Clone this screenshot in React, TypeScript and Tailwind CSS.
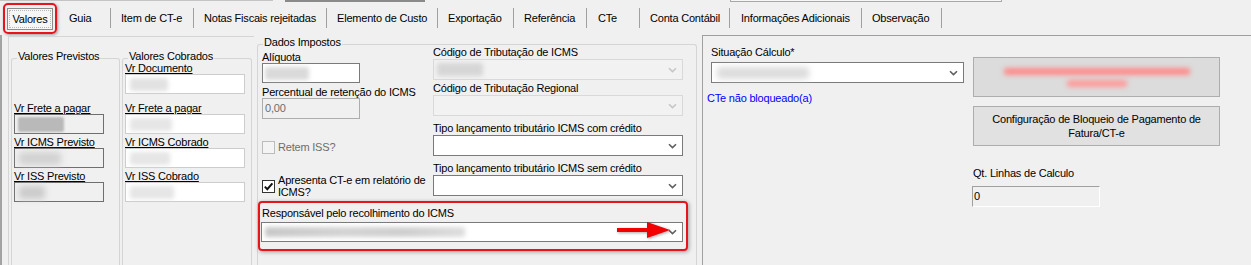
import React from "react";

const tabs = [
  { label: "Item de CT-e", cls: "w-[82px] pl-[10px]" },
  { label: "Notas Fiscais rejeitadas", cls: "w-[132px] pl-[10px]" },
  { label: "Elemento de Custo", cls: "w-[110px] pl-[10px]" },
  { label: "Exportação", cls: "w-[75px] pl-[10px]" },
  { label: "Referência", cls: "w-[72px] pl-[10px]" },
  { label: "CTe", cls: "w-[52px] pl-[11px]" },
  { label: "Conta Contábil", cls: "w-[89px] pl-[10px]" },
  { label: "Informações Adicionais", cls: "w-[131px] pl-[11px]" },
  { label: "Observação", cls: "w-[79px] pl-[10px]" },
];

function Sep() {
  return <div className="mt-[5px] h-[20px] w-px bg-[#a0a0a0]" />;
}

function Chevron({ disabled }: { disabled?: boolean }) {
  return (
    <svg width="9" height="6" viewBox="0 0 9 6" className="shrink-0">
      <path
        d="M1 1.2L4.5 4.6L8 1.2"
        fill="none"
        stroke={disabled ? "#c6c6c6" : "#5f5f5f"}
        strokeWidth="1.6"
      />
    </svg>
  );
}

function Label({ children, className = "" }: { children: React.ReactNode; className?: string }) {
  return <div className={`h-[12px] whitespace-nowrap leading-[12px] ${className}`}>{children}</div>;
}

function Combo({
  disabled,
  children,
  className = "",
}: {
  disabled?: boolean;
  children?: React.ReactNode;
  className?: string;
}) {
  return (
    <div
      className={`relative flex items-center border pl-[3px] pr-[5px] ${
        disabled ? "border-[#d9d9d9] bg-[#f2f2f2]" : "border-[#7a7a7a] bg-white"
      } ${className}`}
    >
      <div className="flex min-w-0 flex-1 items-center">{children}</div>
      <Chevron disabled={disabled} />
    </div>
  );
}

function Smudge({ className }: { className: string }) {
  return <div className={`rounded-[2px] ${className}`} />;
}

function Group({
  title,
  className = "",
  children,
}: {
  title: string;
  className?: string;
  children?: React.ReactNode;
}) {
  return (
    <div className={`relative rounded-t-[3px] border border-b-0 border-[#d5d5d5] ${className}`}>
      <span className="absolute -top-[9px] left-[5px] whitespace-nowrap bg-[#f0f0f0] px-px leading-[12px]">
        {title}
      </span>
      {children}
    </div>
  );
}

function GrayField({ children }: { children?: React.ReactNode }) {
  return (
    <div className="flex h-[20px] w-[90px] items-center border border-[#6f6f6f] bg-[#f0f0f0] pl-[2px]">
      {children}
    </div>
  );
}

function WhiteField({ children }: { children?: React.ReactNode }) {
  return (
    <div className="flex h-[20px] w-[120px] items-center border border-[#cdcdcd] bg-white pl-[2px]">
      {children}
    </div>
  );
}

export default function App() {
  return (
    <div className="h-[265px] w-[1251px] overflow-hidden bg-[#f0f0f0] font-['Liberation_Sans',Arial,sans-serif] text-[11px] tracking-[-0.2px] text-black">
      {/* slice of the controls above */}
      <div className="flex h-[3px] items-start">
        <div className="h-px w-[273px] bg-[#c4c4c4]" />
        <div className="ml-[12px] h-[2px] w-[140px] bg-[#8a8a8a]" />
        <div className="ml-[305px] h-[2px] w-[272px] border-x border-b border-[#a8a8a8] bg-[#f7f7f7]" />
      </div>

      {/* tab strip */}
      <div className="flex h-[32px] items-start">
        <div className="ml-[3px] h-[31px] w-[54px] rounded-[5px] border-2 border-[#e8141b] px-[2px] pt-[3px] shadow-[1px_1px_3px_rgba(0,0,0,0.35)]">
          <div className="h-[22px] w-[46px] border border-[#8c8c8c] bg-[#f6f6f6] p-px">
            <div className="flex h-full items-center justify-center border border-dotted border-[#b8b8b8]">
              Valores
            </div>
          </div>
        </div>
        <div className="flex h-[31px] w-[53px] items-center pl-[12px]">Guia</div>
        <Sep />
        {tabs.map((t) => (
          <React.Fragment key={t.label}>
            <div className={`flex h-[31px] items-center whitespace-nowrap ${t.cls}`}>{t.label}</div>
            <Sep />
          </React.Fragment>
        ))}
      </div>

      {/* tab page */}
      <div className="flex h-[230px]">
        <div className="flex w-[702px] shrink-0 items-start border-l-2 border-[#a3a3a3]">
          {/* valores panel */}
          <div className="ml-[6px] mt-px flex h-[240px] w-[246px] border-l border-t border-[#d5d5d5]">
            <Group title="Valores Previstos" className="ml-[2px] mt-[21px] h-[220px] w-[109px] pl-[2px]">
              <div className="mt-[43px]">
                <Label className="underline">Vr Frete a pagar</Label>
                <GrayField>
                  <Smudge className="ml-px h-[15px] w-[46px] bg-[#b9b9b9] blur-[1px]" />
                </GrayField>
                <Label className="mt-[2px] underline">Vr ICMS Previsto</Label>
                <GrayField>
                  <Smudge className="ml-[2px] h-[13px] w-[42px] bg-[#d2d2d2] blur-[3px]" />
                </GrayField>
                <Label className="mt-[2px] underline">Vr ISS Previsto</Label>
                <GrayField>
                  <Smudge className="ml-[2px] h-[13px] w-[26px] bg-[#cbcbcb] blur-[3px]" />
                </GrayField>
              </div>
            </Group>
            <Group title="Valores Cobrados" className="ml-[2px] mt-[21px] h-[220px] w-[130px] pl-[2px]">
              <div className="mt-[3px]">
                <Label className="underline">Vr Documento</Label>
                <WhiteField>
                  <Smudge className="ml-[2px] h-[13px] w-[38px] bg-[#e2e2e2] blur-[2px]" />
                </WhiteField>
                <Label className="mt-[8px] underline">Vr Frete a pagar</Label>
                <WhiteField>
                  <Smudge className="ml-[2px] h-[13px] w-[42px] bg-[#e6e6e6] blur-[2px]" />
                </WhiteField>
                <Label className="mt-[2px] underline">Vr ICMS Cobrado</Label>
                <WhiteField>
                  <Smudge className="ml-[2px] h-[13px] w-[40px] bg-[#e6e6e6] blur-[2px]" />
                </WhiteField>
                <Label className="mt-[2px] underline">Vr ISS Cobrado</Label>
                <WhiteField>
                  <Smudge className="ml-[2px] h-[13px] w-[44px] bg-[#e6e6e6] blur-[2px]" />
                </WhiteField>
              </div>
            </Group>
          </div>

          {/* dados impostos */}
          <Group title="Dados Impostos" className="ml-[3px] mt-[9px] h-[221px] w-[440px]">
            <div className="flex h-[156px]">
              <div className="ml-[4px] flex w-[171px] flex-col">
                <Label className="mt-[6px]">Alíquota</Label>
                <div className="flex h-[20px] w-[98px] items-center border border-[#7a7a7a] bg-white pl-[2px]">
                  <Smudge className="h-[13px] w-[44px] bg-[#dadada] blur-[2px]" />
                </div>
                <Label className="mt-[3px]">Percentual de retenção do ICMS</Label>
                <div className="flex h-[21px] w-[98px] items-center border border-[#adadad] bg-[#f0f0f0] pl-[2px] text-[#6d6d6d]">
                  0,00
                </div>
                <div className="mt-[22px] flex h-[13px] items-center">
                  <div className="h-[13px] w-[13px] border border-[#bcbcbc] bg-[#f4f4f4]" />
                  <span className="ml-[3px] text-[#6d6d6d]">Retem ISS?</span>
                </div>
                <div className="mt-[20px] flex items-center">
                  <div className="flex h-[13px] w-[13px] shrink-0 items-center justify-center border border-[#333333] bg-white">
                    <svg width="11" height="11" viewBox="0 0 11 11">
                      <path d="M1.8 5.6L4.3 8.2L9.4 2.4" fill="none" stroke="#111" strokeWidth="2" />
                    </svg>
                  </div>
                  <div className="ml-[3px] whitespace-nowrap leading-[12px]">
                    Apresenta CT-e em relatório de
                    <br />
                    ICMS?
                  </div>
                </div>
              </div>
              <div className="flex w-[250px] flex-col">
                <Label className="mt-px">Código de Tributação de ICMS</Label>
                <Combo disabled className="mt-px h-[21px]">
                  <Smudge className="h-[13px] w-[46px] bg-[#d6d6d6] blur-[2px]" />
                </Combo>
                <Label className="mt-[2px]">Código de Tributação Regional</Label>
                <Combo disabled className="mt-px h-[21px]" />
                <Label className="mt-[6px]">Tipo lançamento tributário ICMS com crédito</Label>
                <Combo className="mt-px h-[21px]" />
                <Label className="mt-[6px]">Tipo lançamento tributário ICMS sem crédito</Label>
                <Combo className="mt-px h-[21px]" />
              </div>
            </div>
            <div className="mt-0 h-[50px] w-[430px] rounded-[4px] border-2 border-[#e8141b] pl-px pr-[3px] pt-[4px] shadow-[1px_1px_4px_rgba(0,0,0,0.35)]">
              <Label className="ml-px">Responsável pelo recolhimento do ICMS</Label>
              <Combo className="mt-[3px] h-[20px]">
                <Smudge className="h-[10px] w-[200px] bg-[linear-gradient(90deg,#c8c8c8,#d4d4d4_40%,#cfcfcf_70%,#dedede)] blur-[2px]" />
                <svg
                  width="53"
                  height="17"
                  viewBox="0 0 53 17"
                  className="absolute left-[355px] top-[-1px] drop-shadow-[1px_1px_1.5px_rgba(0,0,0,0.35)]"
                >
                  <rect x="0" y="6" width="32" height="4" fill="#f20000" />
                  <polygon points="30,0 53,8 30,16" fill="#f20000" />
                </svg>
              </Combo>
            </div>
          </Group>
        </div>

        {/* right panel */}
        <div className="flex flex-1 border-l border-t border-[#a0a0a0]">
          <div className="ml-[8px] w-[253px] pt-[10px]">
            <Label>Situação Cálculo*</Label>
            <Combo className="mt-[4px] h-[21px]">
              <Smudge className="ml-[2px] h-[12px] w-[92px] bg-[#dcdcdc] blur-[3px]" />
            </Combo>
            <Label className="-ml-[4px] mt-[9px] text-[#0000ff]">CTe não bloqueado(a)</Label>
          </div>
          <div className="ml-[9px] w-[247px] pt-[21px]">
            <div className="flex h-[40px] flex-col items-center justify-center gap-[5px] border border-[#adadad] bg-[#dcdcdc]">
              <Smudge className="h-[7px] w-[186px] bg-[#ff8a8a] blur-[2.5px]" />
              <Smudge className="h-[7px] w-[60px] bg-[#ff9a9a] blur-[2.5px]" />
            </div>
            <div className="mt-[9px] flex h-[40px] items-center justify-center border border-[#adadad] bg-[#e1e1e1] text-center leading-[14px]">
              Configuração de Bloqueio de Pagamento de
              <br />
              Fatura/CT-e
            </div>
            <Label className="mt-[21px]">Qt. Linhas de Calculo</Label>
            <div className="-ml-px mt-[7px] flex h-[21px] w-[128px] items-center border border-b-white border-l-[#a0a0a0] border-r-white border-t-[#a0a0a0] bg-[#f0f0f0] pl-px">
              0
            </div>
          </div>
        </div>
      </div>
    </div>
  );
}
